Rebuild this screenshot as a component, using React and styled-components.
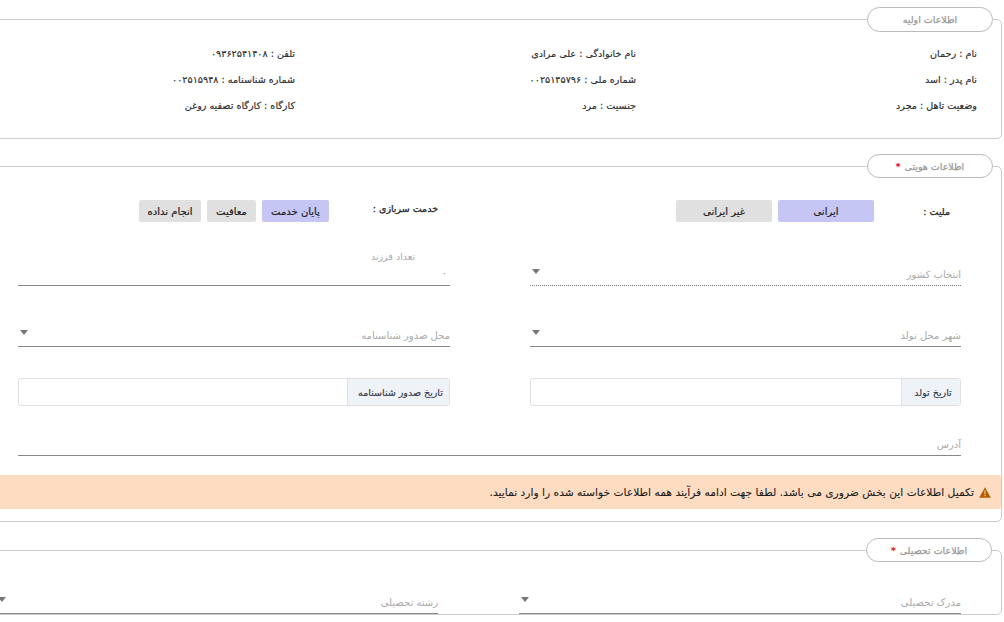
import React from 'react'
import styled, { createGlobalStyle } from 'styled-components'

const Global = createGlobalStyle`
  html, body { margin: 0; padding: 0; height: 622px; overflow: hidden; background: #fff; }
  body { font-family: "DejaVu Sans", "Noto Sans", sans-serif; font-size: 10px; color: #333; }
`

const Page = styled.div`
  direction: rtl;
  width: 1032px;
  margin-left: -30px;
  padding-top: 7px;
`

const Section = styled.fieldset`
  margin: 0 0 ${p => p.$gap || 0}px;
  padding: 0;
  min-width: 0;
  border: 1px solid #ccc;
  border-radius: 5px;
`

const Legend = styled.legend`
  box-sizing: border-box;
  width: 126px;
  height: ${p => p.$h || 24}px;
  margin-right: ${p => p.$inset || 8}px;
  padding: 0;
  border: 1px solid #bbb;
  border-radius: 13px;
  background: #fff;
  display: flex;
  align-items: center;
  justify-content: center;
  gap: 4px;
  color: #999;
  font-size: 9.5px;
  -webkit-text-stroke: 0.25px #999;
`

const Star = styled.span`
  color: #e00000;
  -webkit-text-stroke: 0.25px #e00000;
`

const InfoGrid = styled.div`
  display: grid;
  grid-template-columns: 341px 341px 341px;
  grid-auto-rows: 26px;
  padding: 8px 24px 20px 0;
  align-items: center;
`

const Info = styled.div`
  font-size: 9.6px;
  color: #2b2b2b;
  -webkit-text-stroke: 0.15px #2b2b2b;
`

const Body = styled.div`
  padding: ${p => p.$top || 21}px 40px 0 0;
`

const Row = styled.div`
  display: grid;
  grid-template-columns: ${p => p.$cols || '431px 432px'};
  column-gap: ${p => p.$gap || 80}px;
  margin-top: ${p => p.$top || 0}px;
`

const ChoiceField = styled.div`
  display: flex;
  align-items: center;
  height: 22px;
`

const ChoiceLabel = styled.div`
  width: ${p => p.$w}px;
  flex: none;
  padding-right: ${p => p.$pad}px;
  padding-bottom: ${p => p.$lift || 0}px;
  box-sizing: border-box;
  font-size: 9.5px;
  color: #222;
  -webkit-text-stroke: 0.25px #222;
`

const Choices = styled.div`
  display: flex;
  gap: 6px;
`

const Choice = styled.div`
  width: ${p => p.$w}px;
  height: 22px;
  display: flex;
  align-items: center;
  justify-content: center;
  border-radius: 2px;
  font-size: 10px;
  color: #222;
  -webkit-text-stroke: 0.2px #222;
  background: ${p => (p.$on ? '#c5c6f3' : '#e0e0e0')};
`

const Field = styled.div`
  box-sizing: border-box;
  height: 40px;
  padding-bottom: 5px;
  display: flex;
  align-items: flex-end;
  justify-content: space-between;
  border-bottom: 1px ${p => (p.$dotted ? 'dotted #777' : 'solid #888')};
  color: #aaa;
  font-size: 10px;
`

const Caret = styled.span`
  width: 0;
  height: 0;
  margin: 0 0 6px 2px;
  border-style: solid;
  border-width: 5px 4.5px 0;
  border-color: #777 transparent transparent;
`

const NumberField = styled(Field)`
  display: block;
  padding: 1px 0 0;
  font-size: 9.5px;
`

const FloatLabel = styled.div`
  padding-right: 35px;
  line-height: 19px;
`

const NumberValue = styled.div`
  padding-right: 3px;
  line-height: 14px;
  color: #888;
`

const InputGroup = styled.div`
  display: flex;
  height: 28px;
  box-sizing: border-box;
  border: 1px solid #dee2e6;
  border-radius: 3px;
  background: #fff;
`

const Addon = styled.div`
  box-sizing: border-box;
  width: ${p => p.$w}px;
  padding-left: 4px;
  display: flex;
  align-items: center;
  justify-content: center;
  background: #eff3f7;
  border-left: 1px solid #dee2e6;
  color: #33384a;
  font-size: 9.5px;
  -webkit-text-stroke: 0.15px #33384a;
`

const Address = styled(Field)`
  width: 943px;
  margin-top: 10px;
`

const Banner = styled.div`
  display: flex;
  align-items: center;
  gap: 5px;
  height: 34px;
  margin-top: 19px;
  margin-bottom: 12px;
  padding-right: 10px;
  border-radius: 0 3px 3px 0;
  background: #fedcc1;
  color: #1c1c1c;
  font-size: 10.7px;
  -webkit-text-stroke: 0.1px #1c1c1c;
`

const Warn = () => (
  <svg width="12" height="11" viewBox="0 0 12 11">
    <path d="M6 0.3 L11.8 10.7 L0.2 10.7 Z" fill="#b85a00" />
    <path d="M5.5 3.6 H6.5 V7.2 H5.5 Z M5.5 8 H6.5 V9.2 H5.5 Z" fill="#fedcc1" />
  </svg>
)

const Select = ({ label, dotted }) => (
  <Field $dotted={dotted}>
    <span>{label}</span>
    <Caret />
  </Field>
)

const info = [
  'نام : رحمان', 'نام خانوادگی : علی مرادی', 'تلفن : ۰۹۳۶۲۵۴۱۴۰۸',
  'نام پدر : اسد', 'شماره ملی : ۰۰۲۵۱۴۵۷۹۶', 'شماره شناسنامه : ۰۰۲۵۱۵۹۴۸',
  'وضعیت تاهل : مجرد', 'جنسیت : مرد', 'کارگاه : کارگاه تصفیه روغن',
]

export default function App() {
  return (
    <>
      <Global />
      <Page>
        <Section $gap={15}>
          <Legend $h={25}>اطلاعات اولیه</Legend>
          <InfoGrid>
            {info.map(t => <Info key={t}>{t}</Info>)}
          </InfoGrid>
        </Section>

        <Section $gap={16}>
          <Legend>اطلاعات هویتی <Star>*</Star></Legend>
          <Body $top={22}>
            <Row>
              <ChoiceField>
                <ChoiceLabel $w={87} $pad={11}>ملیت :</ChoiceLabel>
                <Choices>
                  <Choice $w={96} $on>ایرانی</Choice>
                  <Choice $w={96}>غیر ایرانی</Choice>
                </Choices>
              </ChoiceField>
              <ChoiceField>
                <ChoiceLabel $w={121} $pad={12} $lift={5}>خدمت سربازی :</ChoiceLabel>
                <Choices>
                  <Choice $w={67} $on>پایان خدمت</Choice>
                  <Choice $w={49}>معافیت</Choice>
                  <Choice $w={62}>انجام نداده</Choice>
                </Choices>
              </ChoiceField>
            </Row>
            <Row $top={24}>
              <Select label="انتخاب کشور" dotted />
              <NumberField>
                <FloatLabel>تعداد فرزند</FloatLabel>
                <NumberValue>۰</NumberValue>
              </NumberField>
            </Row>
            <Row $top={21}>
              <Select label="شهر محل تولد" />
              <Select label="محل صدور شناسنامه" />
            </Row>
            <Row $top={31}>
              <InputGroup><Addon $w={59}>تاریخ تولد</Addon></InputGroup>
              <InputGroup><Addon $w={102}>تاریخ صدور شناسنامه</Addon></InputGroup>
            </Row>
            <Address>آدرس</Address>
          </Body>
          <Banner>
            <Warn />
            <span>تکمیل اطلاعات این بخش ضروری می باشد. لطفا جهت ادامه فرآیند همه اطلاعات خواسته شده را وارد نمایید.</span>
          </Banner>
        </Section>

        <Section>
          <Legend $inset={9}>اطلاعات تحصیلی <Star>*</Star></Legend>
          <Body $top={12}>
            <Row $cols="442px 442px" $gap={81}>
              <Select label="مدرک تحصیلی" />
              <Select label="رشته تحصیلی" />
            </Row>
          </Body>
        </Section>
      </Page>
    </>
  )
}
